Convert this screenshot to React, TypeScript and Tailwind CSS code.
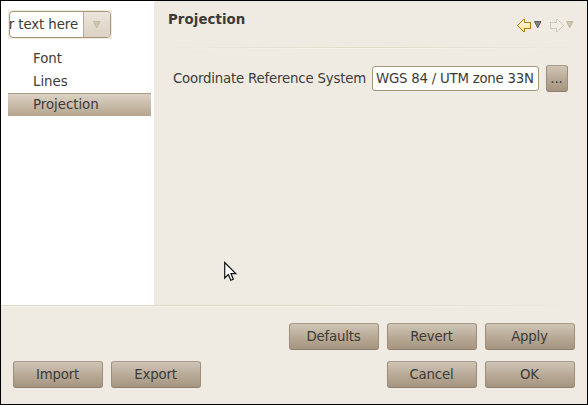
import type { ReactNode } from "react";

const pages = ["Font", "Lines", "Projection"];

function Button({ children, small = false }: { children: ReactNode; small?: boolean }) {
  return (
    <button
      className={`${small ? "w-[22px]" : "w-[90px]"} flex h-[27px] shrink-0 items-center justify-center rounded-[3px] border border-[#9d8c77] border-t-[#a89c88] border-b-[#8f7f6c] bg-linear-to-b from-[#d0c5b6] via-[#b9ab98] to-[#a59580] pr-px pb-px whitespace-nowrap`}
    >
      {children}
    </button>
  );
}

function Triangle({ disabled = false }: { disabled?: boolean }) {
  return (
    <svg width="8" height="8" viewBox="0 0 8 8" className="shrink-0">
      <path d="M.5 .5h6.5L3.75 6.8z" fill={disabled ? "#d0c5ae" : "#85827e"} stroke={disabled ? "#c4b9a2" : "#5f5d59"} />
    </svg>
  );
}

function Arrow({ forward = false }: { forward?: boolean }) {
  return (
    <svg
      width="15"
      height="13"
      viewBox="0 0 15 13"
      shapeRendering="crispEdges"
      className={forward ? "shrink-0 -scale-x-100" : "shrink-0"}
    >
      <defs>
        <linearGradient id="gold" x1="0" y1="0" x2="0" y2="1">
          <stop offset="0" stopColor="#fffdf0" />
          <stop offset="1" stopColor="#ffe08a" />
        </linearGradient>
      </defs>
      <path
        d="M.5 6.5 6.5 .5H7.5V3.5H13.5V9.5H7.5V12.5H6.5Z"
        fill={forward ? "#f1ede6" : "url(#gold)"}
        stroke={forward ? "#cfcbc3" : "#b37b0b"}
      />
    </svg>
  );
}

export default function App() {
  return (
    <div className="relative flex h-[405px] w-[588px] flex-col overflow-hidden border border-black bg-[#efebe3] font-['DejaVu_Sans',sans-serif] text-[13.33px] leading-[17px] tracking-[-0.2px] text-[#3c3b37]">
      <div className="flex h-[304px]">
        <aside className="w-[153px] shrink-0 bg-white pt-[9px] pl-[7px]">
          <div className="h-[29px] w-[104px] bg-[#efebe3] p-px">
            <div className="flex h-[27px] w-[102px] overflow-hidden rounded-[4px] border border-[#a6977b] bg-white">
              <div className="flex w-[73px] items-center justify-end overflow-hidden pr-[5px] pb-px tracking-[-0.1px] whitespace-nowrap">r text here</div>
              <div className="flex flex-1 items-center justify-center border-l border-[#b7a992] bg-linear-to-b from-[#ebe5dc] to-[#dcd2c4]">
                <Triangle disabled />
              </div>
            </div>
          </div>
          <ul className="mt-[8px] tracking-[-0.03px]">
            {pages.map((page) => (
              <li
                key={page}
                className={`${page === "Projection" ? "border-t border-[#a99b87] bg-linear-to-b from-[#dcd2c5] to-[#b5a58f]" : "pt-px"} flex h-[23px] w-[143px] items-center pb-px pl-[25px]`}
              >
                {page}
              </li>
            ))}
          </ul>
        </aside>
        <main className="flex-1">
          <header className="flex h-[46px] items-start pt-[10px] pr-[13px] pl-[14px]">
            <h1 className="font-bold tracking-[0.08px]">Projection</h1>
            <div className="mt-[8px] ml-auto flex items-center">
              <Arrow />
              <span className="mb-px ml-[2px] flex"><Triangle /></span>
              <span className="ml-[7px] flex"><Arrow forward /></span>
              <span className="mb-px ml-[2px] flex"><Triangle disabled /></span>
            </div>
          </header>
          <div className="h-px bg-linear-to-r from-[#efebe3] via-[#dfd9c9] to-[#efebe3]" />
          <div className="h-px bg-linear-to-r from-[#efebe3] via-[#f5f2ec] to-[#efebe3]" />
          <div className="mt-[16px] flex items-center pl-[19px]">
            <span className="w-[199px] shrink-0 whitespace-nowrap">Coordinate Reference System</span>
            <div className="flex h-[25px] w-[167px] shrink-0 items-center overflow-hidden rounded-[3px] border border-[#a6977b] bg-white pl-[3px] tracking-[-0.24px] whitespace-nowrap">
              WGS 84 / UTM zone 33N
            </div>
            <div className="ml-[7px] tracking-normal"><Button small>...</Button></div>
          </div>
        </main>
      </div>
      <div className="h-px shrink-0 bg-linear-to-r from-[#dfd9c9] from-50% to-[#efebe3]" />
      <div className="h-px shrink-0 bg-linear-to-r from-[#f5f2ec] from-50% to-[#efebe3]" />
      <footer className="pt-[16px] pr-[12px] pl-[12px]">
        <div className="flex justify-end gap-2">
          <Button>Defaults</Button>
          <Button>Revert</Button>
          <Button>Apply</Button>
        </div>
        <div className="mt-[11px] flex gap-2">
          <Button>Import</Button>
          <Button>Export</Button>
          <div className="flex-1" />
          <Button>Cancel</Button>
          <Button>OK</Button>
        </div>
      </footer>
      <svg width="14" height="21" viewBox="0 0 14 21" className="absolute top-[260px] left-[223px]">
        <path d="M.7 1.5V17L4.4 13.5 6.8 19.3 9.3 18.2 7 12.7H11.8Z" fill="white" stroke="#111" strokeWidth="1.2" />
      </svg>
    </div>
  );
}
